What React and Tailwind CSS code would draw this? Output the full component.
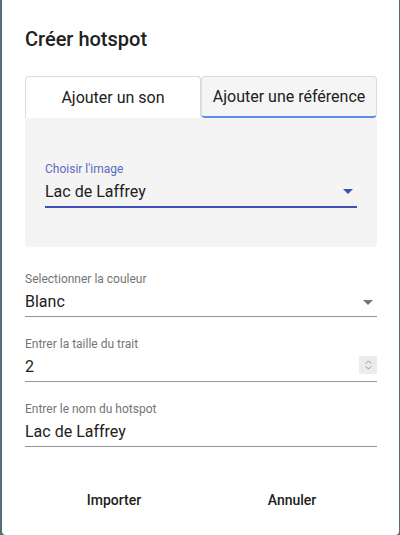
import React from 'react';

const ArrowDrop = ({ className }) => (
  <svg viewBox="0 0 24 24" className={className} fill="currentColor">
    <path d="M7 10l5 5 5-5z" />
  </svg>
);

const Field = ({ label, value, select, spinner }) => (
  <div className="relative">
    <div className="text-[12px] leading-[16px] text-[#757575]">{label}</div>
    <div className="relative mt-[1px] pt-[4px] pb-[5px] border-b border-[#949494]">
      <div className="text-[16px] leading-[19px] text-[#212121]">{value}</div>
      {select && (
        <ArrowDrop className="absolute right-[-3px] top-[2px] w-6 h-6 text-[#757575]" />
      )}
      {spinner && (
        <div className="absolute right-0 top-[3px] w-[18px] h-[18px] bg-[#ececec] flex flex-col items-center justify-center">
          <svg viewBox="0 0 10 12" className="w-[9px] h-[12px]" fill="none" stroke="#8a8a8a" strokeWidth="1">
            <path d="M2 4.5l3-3 3 3" />
            <path d="M2 7.5l3 3 3-3" />
          </svg>
        </div>
      )}
    </div>
  </div>
);

export default function App() {
  return (
    <div className="w-[400px] h-[535px] bg-[#546e7a] overflow-hidden font-['Roboto',sans-serif]">
      <div className="ml-[2px] -mt-[4px] h-[539px] w-[397px] bg-white rounded-[4px] pl-[23px] pr-[22px]">
        <h2 className="pt-[27px] text-[20px] leading-[32px] font-medium text-[#212121]">Créer hotspot</h2>

        <div className="mt-[21px] flex h-[42px]">
          <button className="w-[176px] bg-white border border-b-0 border-[#dcdcdc] rounded-t-[4px] text-[16px] text-[#212121]">
            Ajouter un son
          </button>
          <button className="w-[176px] bg-[#f5f5f5] border border-[#dcdcdc] border-b-2 border-b-[#5c8fe6] rounded-[4px] text-[16px] text-[#212121]">
            Ajouter une référence
          </button>
        </div>

        <div className="h-[129px] bg-[#f4f4f4] rounded-[4px] px-[20px] pt-[43px]">
          <div className="text-[12px] leading-[16px] text-[#5c6bc0]">Choisir l'image</div>
          <div className="relative mt-[1px] pt-[4px] pb-[5px] border-b-2 border-[#3f51b5]">
            <div className="text-[16px] leading-[19px] text-[#212121]">Lac de Laffrey</div>
            <ArrowDrop className="absolute right-[-3px] top-[1px] w-6 h-6 text-[#3f51b5]" />
          </div>
        </div>

        <div className="mt-[24px] flex flex-col gap-[19px]">
          <Field label="Selectionner la couleur" value="Blanc" select />
          <Field label="Entrer la taille du trait" value="2" spinner />
          <Field label="Entrer le nom du hotspot" value="Lac de Laffrey" />
        </div>

        <div className="mt-[35px] flex w-[356px]">
          <button className="w-1/2 h-[36px] text-[14px] font-medium text-[#212121]">Importer</button>
          <button className="w-1/2 h-[36px] text-[14px] font-medium text-[#212121]">Annuler</button>
        </div>
      </div>
    </div>
  );
}
